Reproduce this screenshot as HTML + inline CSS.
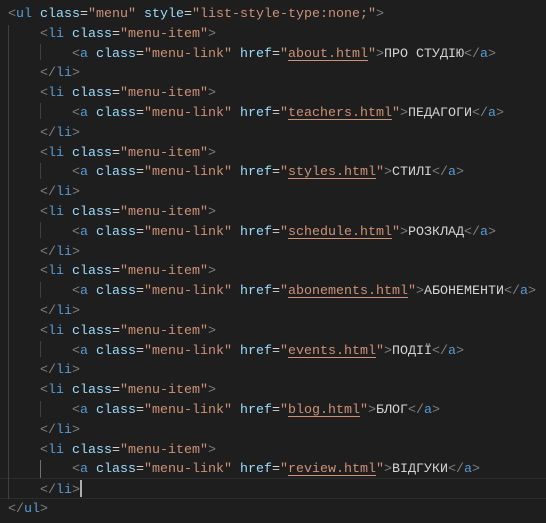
<!DOCTYPE html>
<html><head><meta charset="utf-8"><style>
html,body{margin:0;padding:0;background:#1e1e1e;width:546px;height:523px;overflow:hidden}
.ed{position:relative;font-family:"Liberation Mono",monospace;font-size:13.33px;line-height:19.8px;color:#d4d4d4;padding-top:5px}
.l{height:19.8px;white-space:pre;padding-left:8px;position:relative}
.p{color:#808080}.t{color:#569cd6}.a{color:#9cdcfe}.s{color:#ce9178}
.u{text-decoration:underline;text-decoration-color:#ce9178;text-underline-offset:3px}
.g{position:absolute;width:1px;background:#404040}
.cur{position:absolute;left:0;right:0;border-top:1px solid #2c2c2c;border-bottom:1px solid #2c2c2c;box-sizing:border-box}
</style></head><body><div class="ed">
<div class="cur" style="top:478px;height:21px"></div>
<div class="g" style="left:8px;top:25px;height:474px"></div>
<div class="g" style="left:40px;top:44px;height:16px"></div>
<div class="g" style="left:40px;top:163px;height:16px"></div>
<div class="g" style="left:40px;top:103px;height:16px"></div>
<div class="g" style="left:40px;top:222px;height:16px"></div>
<div class="g" style="left:40px;top:282px;height:16px"></div>
<div class="g" style="left:40px;top:341px;height:16px"></div>
<div class="g" style="left:40px;top:401px;height:16px"></div>
<div class="g" style="left:40px;top:460px;height:18px;background:#707070"></div>
<div class="l"><span class="p">&lt;</span><span class="t">ul</span> <span class="a">class</span>=<span class="s">"menu"</span> <span class="a">style</span>=<span class="s">"list-style-type:none;"</span><span class="p">&gt;</span></div>
<div class="l">    <span class="p">&lt;</span><span class="t">li</span> <span class="a">class</span>=<span class="s">"menu-item"</span><span class="p">&gt;</span></div>
<div class="l">        <span class="p">&lt;</span><span class="t">a</span> <span class="a">class</span>=<span class="s">"menu-link"</span> <span class="a">href</span>=<span class="s">"<span class="u">about.html</span>"</span><span class="p">&gt;</span>ПРО СТУДІЮ<span class="p">&lt;/</span><span class="t">a</span><span class="p">&gt;</span></div>
<div class="l">    <span class="p">&lt;/</span><span class="t">li</span><span class="p">&gt;</span></div>
<div class="l">    <span class="p">&lt;</span><span class="t">li</span> <span class="a">class</span>=<span class="s">"menu-item"</span><span class="p">&gt;</span></div>
<div class="l">        <span class="p">&lt;</span><span class="t">a</span> <span class="a">class</span>=<span class="s">"menu-link"</span> <span class="a">href</span>=<span class="s">"<span class="u">teachers.html</span>"</span><span class="p">&gt;</span>ПЕДАГОГИ<span class="p">&lt;/</span><span class="t">a</span><span class="p">&gt;</span></div>
<div class="l">    <span class="p">&lt;/</span><span class="t">li</span><span class="p">&gt;</span></div>
<div class="l">    <span class="p">&lt;</span><span class="t">li</span> <span class="a">class</span>=<span class="s">"menu-item"</span><span class="p">&gt;</span></div>
<div class="l">        <span class="p">&lt;</span><span class="t">a</span> <span class="a">class</span>=<span class="s">"menu-link"</span> <span class="a">href</span>=<span class="s">"<span class="u">styles.html</span>"</span><span class="p">&gt;</span>СТИЛІ<span class="p">&lt;/</span><span class="t">a</span><span class="p">&gt;</span></div>
<div class="l">    <span class="p">&lt;/</span><span class="t">li</span><span class="p">&gt;</span></div>
<div class="l">    <span class="p">&lt;</span><span class="t">li</span> <span class="a">class</span>=<span class="s">"menu-item"</span><span class="p">&gt;</span></div>
<div class="l">        <span class="p">&lt;</span><span class="t">a</span> <span class="a">class</span>=<span class="s">"menu-link"</span> <span class="a">href</span>=<span class="s">"<span class="u">schedule.html</span>"</span><span class="p">&gt;</span>РОЗКЛАД<span class="p">&lt;/</span><span class="t">a</span><span class="p">&gt;</span></div>
<div class="l">    <span class="p">&lt;/</span><span class="t">li</span><span class="p">&gt;</span></div>
<div class="l">    <span class="p">&lt;</span><span class="t">li</span> <span class="a">class</span>=<span class="s">"menu-item"</span><span class="p">&gt;</span></div>
<div class="l">        <span class="p">&lt;</span><span class="t">a</span> <span class="a">class</span>=<span class="s">"menu-link"</span> <span class="a">href</span>=<span class="s">"<span class="u">abonements.html</span>"</span><span class="p">&gt;</span>АБОНЕМЕНТИ<span class="p">&lt;/</span><span class="t">a</span><span class="p">&gt;</span></div>
<div class="l">    <span class="p">&lt;/</span><span class="t">li</span><span class="p">&gt;</span></div>
<div class="l">    <span class="p">&lt;</span><span class="t">li</span> <span class="a">class</span>=<span class="s">"menu-item"</span><span class="p">&gt;</span></div>
<div class="l">        <span class="p">&lt;</span><span class="t">a</span> <span class="a">class</span>=<span class="s">"menu-link"</span> <span class="a">href</span>=<span class="s">"<span class="u">events.html</span>"</span><span class="p">&gt;</span>ПОДІЇ<span class="p">&lt;/</span><span class="t">a</span><span class="p">&gt;</span></div>
<div class="l">    <span class="p">&lt;/</span><span class="t">li</span><span class="p">&gt;</span></div>
<div class="l">    <span class="p">&lt;</span><span class="t">li</span> <span class="a">class</span>=<span class="s">"menu-item"</span><span class="p">&gt;</span></div>
<div class="l">        <span class="p">&lt;</span><span class="t">a</span> <span class="a">class</span>=<span class="s">"menu-link"</span> <span class="a">href</span>=<span class="s">"<span class="u">blog.html</span>"</span><span class="p">&gt;</span>БЛОГ<span class="p">&lt;/</span><span class="t">a</span><span class="p">&gt;</span></div>
<div class="l">    <span class="p">&lt;/</span><span class="t">li</span><span class="p">&gt;</span></div>
<div class="l">    <span class="p">&lt;</span><span class="t">li</span> <span class="a">class</span>=<span class="s">"menu-item"</span><span class="p">&gt;</span></div>
<div class="l">        <span class="p">&lt;</span><span class="t">a</span> <span class="a">class</span>=<span class="s">"menu-link"</span> <span class="a">href</span>=<span class="s">"<span class="u">review.html</span>"</span><span class="p">&gt;</span>ВІДГУКИ<span class="p">&lt;/</span><span class="t">a</span><span class="p">&gt;</span></div>
<div class="l">    <span class="p">&lt;/</span><span class="t">li</span><span class="p">&gt;</span><span style="display:inline-block;width:2px;height:17px;background:#aeafad;vertical-align:-4px"></span></div>
<div class="l"><span class="p">&lt;/</span><span class="t">ul</span><span class="p">&gt;</span></div>
</div></body></html>
